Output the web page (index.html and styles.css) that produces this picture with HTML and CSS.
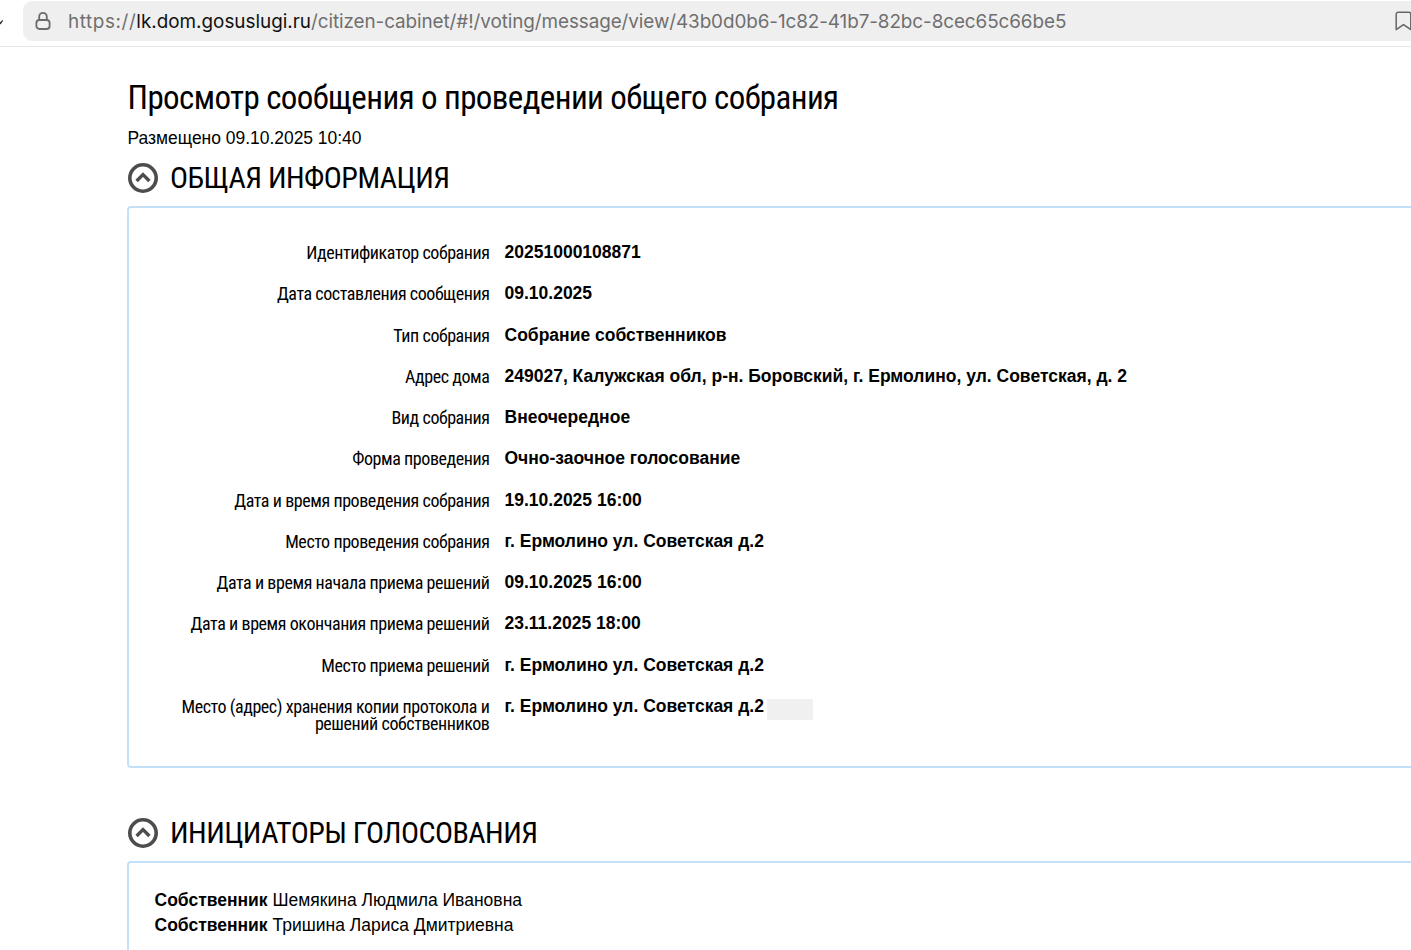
FILE: index.html
```html
<!DOCTYPE html>
<html lang="ru">
<head>
<meta charset="utf-8">
<title>Просмотр сообщения</title>
<link rel="stylesheet" href="styles.css">
</head>
<body>
<header class="browser">
  <svg class="back" width="4" height="8" viewBox="0 0 4 8"><path d="M-2 1 L0.6 4.4 L2.6 1.4" fill="none" stroke="#333" stroke-width="1.3"/></svg>
  <div class="addr">
    <svg class="lock" width="18" height="20" viewBox="0 0 18 20"><path d="M5.2 9V5.6a3.8 3.8 0 0 1 7.6 0V9" fill="none" stroke="#6b6b6b" stroke-width="1.8"/><rect x="2.4" y="9" width="13.2" height="9" rx="3" fill="none" stroke="#6b6b6b" stroke-width="1.8"/></svg>
    <div class="url"><span class="proto">https://</span><b>lk.dom.gosuslugi.ru</b>/citizen-cabinet/#!/voting/message/view/43b0d0b6-1c82-41b7-82bc-8cec65c66be5</div>
    <svg class="mark" width="17" height="20" viewBox="0 0 17 20"><path d="M1.2 18.6V3.2a2 2 0 0 1 2-2h10.6a2 2 0 0 1 2 2v15.4L8.5 13.6z" fill="none" stroke="#666" stroke-width="1.5" stroke-linejoin="round"/></svg>
  </div>
</header>
<main class="page">
  <h1 class="title">Просмотр сообщения о проведении общего собрания</h1>
  <p class="posted">Размещено 09.10.2025 10:40</p>
  <h2 class="sec"><svg class="chev" viewBox="0 0 30 30"><circle cx="15" cy="15" r="13.2" fill="none" stroke="#4d4d4d" stroke-width="3.6"/><path d="M8.6 18 L15 11.6 L21.4 18" fill="none" stroke="#4d4d4d" stroke-width="3.4"/></svg><span class="sec-text">ОБЩАЯ ИНФОРМАЦИЯ</span></h2>
  <section class="panel info">
    <div class="row"><div class="k">Идентификатор собрания</div><div class="v">20251000108871</div></div>
    <div class="row"><div class="k">Дата составления сообщения</div><div class="v">09.10.2025</div></div>
    <div class="row"><div class="k">Тип собрания</div><div class="v">Собрание собственников</div></div>
    <div class="row"><div class="k">Адрес дома</div><div class="v">249027, Калужская обл, р-н. Боровский, г. Ермолино, ул. Советская, д. 2</div></div>
    <div class="row"><div class="k">Вид собрания</div><div class="v">Внеочередное</div></div>
    <div class="row"><div class="k">Форма проведения</div><div class="v">Очно-заочное голосование</div></div>
    <div class="row"><div class="k">Дата и время проведения собрания</div><div class="v">19.10.2025 16:00</div></div>
    <div class="row"><div class="k">Место проведения собрания</div><div class="v">г. Ермолино ул. Советская д.2</div></div>
    <div class="row"><div class="k">Дата и время начала приема решений</div><div class="v">09.10.2025 16:00</div></div>
    <div class="row"><div class="k">Дата и время окончания приема решений</div><div class="v">23.11.2025 18:00</div></div>
    <div class="row"><div class="k">Место приема решений</div><div class="v">г. Ермолино ул. Советская д.2</div></div>
    <div class="row"><div class="k">Место (адрес) хранения копии протокола и решений собственников</div><div class="v">г. Ермолино ул. Советская д.2<span class="redact"></span></div></div>
  </section>
  <h2 class="sec second"><svg class="chev" viewBox="0 0 30 30"><circle cx="15" cy="15" r="13.2" fill="none" stroke="#4d4d4d" stroke-width="3.6"/><path d="M8.6 18 L15 11.6 L21.4 18" fill="none" stroke="#4d4d4d" stroke-width="3.4"/></svg><span class="sec-text">ИНИЦИАТОРЫ ГОЛОСОВАНИЯ</span></h2>
  <section class="panel people">
    <p class="person"><b>Собственник</b> Шемякина Людмила Ивановна</p>
    <p class="person"><b>Собственник</b> Тришина Лариса Дмитриевна</p>
  </section>
</main>
</body>
</html>
```
FILE: styles.css
```css
html, body { margin: 0; padding: 0; height: 950px; overflow: hidden; background: #fff; color: #000; }
body { font-family: "Liberation Sans", Arial, sans-serif; }
.browser { display: flex; align-items: flex-start; height: 47px; border-bottom: 1px solid #e6e6e6; padding-top: 1px; box-sizing: border-box; }
.back { flex: none; margin: 18px 19px 0 0; }
.addr { flex: none; width: 1388px; height: 40px; background: #efefef; border-radius: 9px 0 0 9px; display: flex; align-items: center; box-sizing: border-box; padding-left: 11px; }
.lock { flex: none; margin-right: 16px; }
.url { flex: none; width: 1326px; padding-top: 1px; font-family: Inter, sans-serif; font-size: 18.87px; letter-spacing: -0.075px; color: #6f6f6f; white-space: nowrap; }
.proto { letter-spacing: 0.6px; }
.url b { font-weight: 400; letter-spacing: 0; color: #111; }
.mark { flex: none; margin-left: 1px; }
.page { padding-left: 127px; }
.title { margin: 29px 0 0; padding-left: 0.5px; font-family: "Roboto Condensed", sans-serif; font-weight: 400; font-size: 33px; letter-spacing: -0.59px; line-height: 43px; white-space: nowrap; }
.posted { margin: 8px 0 0; padding-left: 0.5px; font-size: 17.45px; line-height: 22px; }
.sec { display: flex; align-items: center; gap: 12.5px; margin: 9px 0 0; padding-left: 0.5px; height: 40px; font-family: "Roboto Condensed", sans-serif; font-weight: 400; font-size: 30px; letter-spacing: -0.53px; white-space: nowrap; }
.sec-text { margin-top: -2px; }
.chev { flex: none; width: 30px; height: 30px; }
.panel { box-sizing: border-box; margin: 8px -20px 0 0; border: 2px solid #c4e0f6; border-radius: 4px; }
.info { height: 562px; padding-top: 32px; }
.row { display: grid; grid-template-columns: 345px 1fr; column-gap: 15px; height: 41.27px; padding-left: 15.5px; }
.k { font-family: "Roboto Condensed", sans-serif; font-size: 18px; letter-spacing: -0.43px; line-height: 17px; text-align: right; padding-top: 4px; }
.v { font-weight: 700; font-size: 17.5px; line-height: 24px; white-space: nowrap; }
.redact { display: inline-block; width: 46px; height: 21px; margin-left: 3px; background: #f0f0f0; vertical-align: top; margin-top: 5px; }
.second { margin-top: 45px; }
.people { height: 120px; padding: 25px 0 0 25.5px; margin-top: 8px; }
.person { margin: 0; font-size: 17.5px; line-height: 25px; white-space: nowrap; }
```
